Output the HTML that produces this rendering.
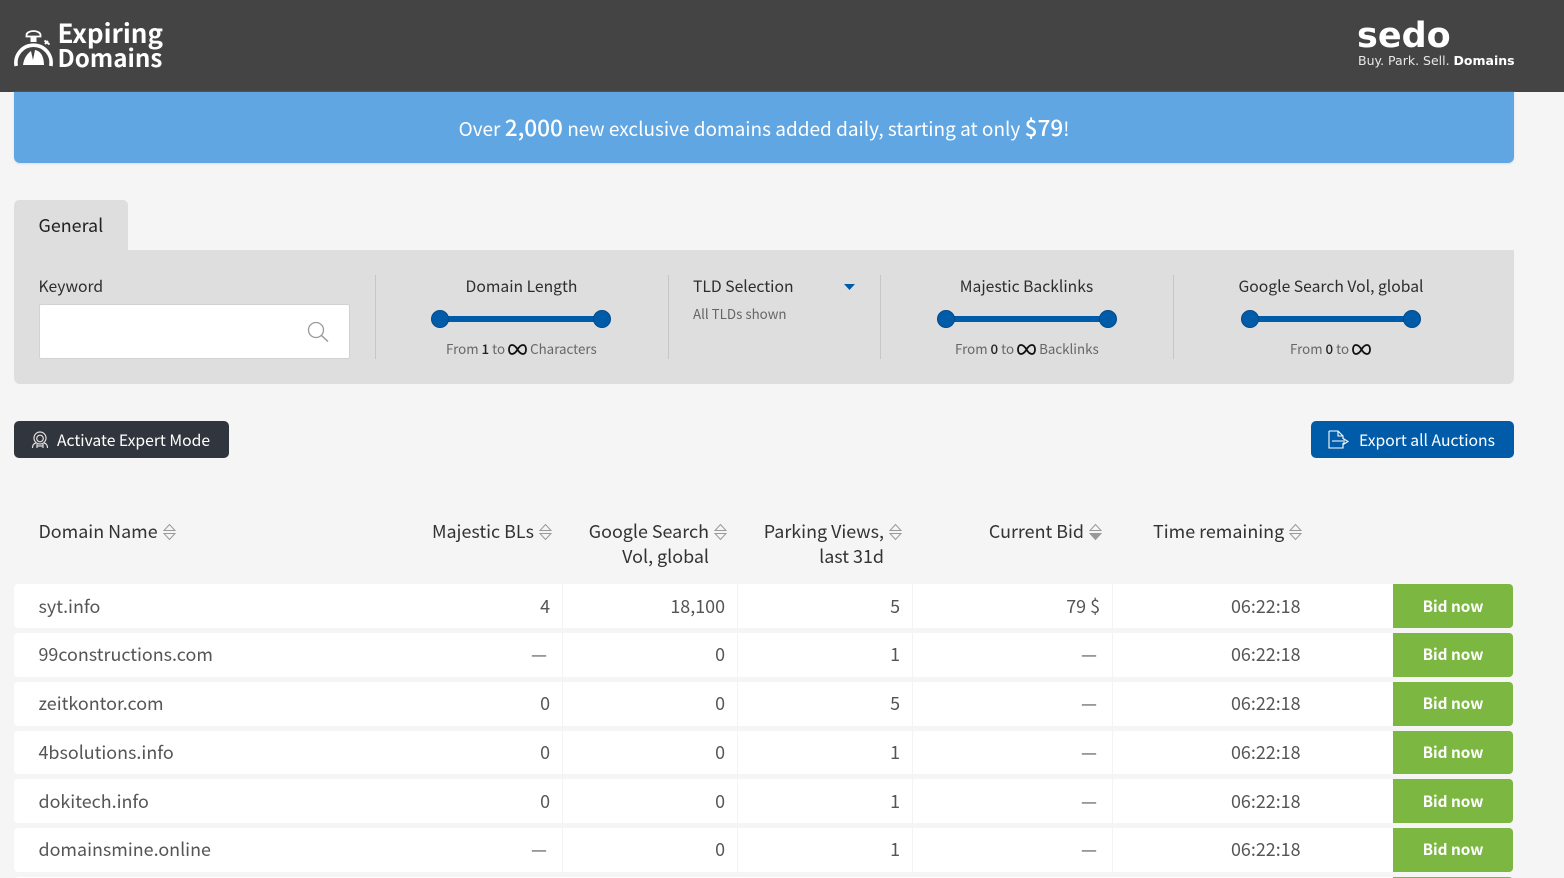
<!DOCTYPE html>
<html><head><meta charset="utf-8"><title>Expiring Domains</title>
<style>
*{box-sizing:border-box}
html,body{margin:0;padding:0;width:1564px;height:878px;overflow:hidden;background:#f5f5f5}
body{position:relative;font-family:"Noto Sans CJK JP","Liberation Sans",sans-serif;color:#333}
.a{position:absolute;white-space:nowrap}
.t{position:absolute;white-space:nowrap;line-height:24px;height:24px}
.lbl{font-size:15.7px;color:#2d2d2d}
.sm{font-size:13.35px;color:#666}
.sm b{color:#222;font-weight:500}
.sm svg{vertical-align:-1px;margin:0 3px 0 3px}
.th{font-size:17.9px;color:#333;line-height:25px}
.row{position:absolute;left:14px;width:1379px;height:44px;background:#fff;border-radius:4px 0 0 4px}
.sep{position:absolute;top:0;width:1px;height:48px;background:#f3f3f3}
.c{position:absolute;top:10px;line-height:24px;font-size:17.9px;color:#555;white-space:nowrap}
.u .c{top:9px}
.r{text-align:right}
.bid{position:absolute;left:1393px;width:120px;height:44px;background:#7cb742;border-radius:0 4px 4px 0;color:#fff;font-weight:700;font-size:15.3px;line-height:43px;text-align:center}
.bid.d{line-height:45px}
.vl{position:absolute;top:275px;width:1px;height:84px;background:#c6c6c6}
.track{position:absolute;height:6px;background:#005ca9;top:316px}
.dot{position:absolute;top:310px;width:18px;height:18px;border-radius:50%;background:#005ca9;border:1px solid #004a88}
</style></head><body>

<div class="a" style="left:0;top:0;width:1564px;height:92px;background:#444"></div>
<svg class="a" style="left:14px;top:28px" width="40" height="40" viewBox="0 0 40 40">
<path d="M12.500 8.500V7A7 4 0 0 1 26.500 7V8.500Z" fill="none" stroke="#fff" stroke-width="1.800"/>
<rect x="16.500" y="8" width="6" height="6" fill="#fff"/>
<path d="M2.200 38A17.600 17.600 0 1 1 36.800 38" fill="none" stroke="#fff" stroke-width="3.600"/>
<path d="M9 37C10 30 13 26 17 23L19 32L21 22C27 23 30 29 30 37Z" fill="#fff"/>
<path d="M31 16l3-3M30.500 12.500l5 4" stroke="#fff" stroke-width="2"/>
</svg>
<div class="a" style="left:57.500px;top:19px;font-size:26px;line-height:28px;font-weight:700;color:#fff">Expiring</div>
<div class="a" style="left:57.500px;top:43px;font-size:24.2px;line-height:28px;font-weight:700;color:#fff">Domains</div>
<div class="a" style="left:1357px;top:15px;font-family:'DejaVu Sans',sans-serif;font-weight:700;font-size:35px;line-height:42px;color:#fff">sedo</div>
<div class="a" style="left:1358px;top:53px;font-family:'DejaVu Sans',sans-serif;font-size:12.5px;line-height:16px;color:#e8e8e8">Buy. Park. Sell. <b style="color:#fff">Domains</b></div>

<div class="a" style="left:14px;top:92px;width:1500px;height:71px;background:#60a6e2;border-radius:0 0 6px 6px;box-shadow:0 1px 2px #ddd"></div>
<div class="a" style="left:14px;top:110px;width:1500px;text-align:center;color:#fff;font-size:19px;line-height:34px">Over <b style="font-weight:500;font-size:22.6px">2,000</b> new exclusive domains added daily, starting at only <b style="font-weight:500;font-size:22.6px">$79</b>!</div>

<div class="a" style="left:14px;top:200px;width:114px;height:52px;background:#dedede;border-radius:5px 5px 0 0"></div>
<div class="a" style="left:38.500px;top:213px;font-size:17.9px;line-height:24px;color:#222">General</div>
<div class="a" style="left:14px;top:250px;width:1500px;height:134px;background:#dedede;border-radius:0 0 6px 6px"></div>

<div class="t lbl" style="left:38.500px;top:274px">Keyword</div>
<div class="a" style="left:39px;top:304px;width:311px;height:55px;background:#fff;border:1px solid #d2d2d2;border-radius:2px"></div>
<svg class="a" style="left:306px;top:320px" width="24" height="24" viewBox="0 0 24 24"><circle cx="10" cy="10" r="7.500" fill="none" stroke="#999" stroke-width="1.300"/><path d="M15.500 15.500l6.500 6" stroke="#999" stroke-width="1.500"/></svg>

<div class="vl" style="left:375px"></div>
<div class="vl" style="left:668px"></div>
<div class="vl" style="left:880px"></div>
<div class="vl" style="left:1173px"></div>

<div class="t lbl" style="left:375px;width:293px;text-align:center;top:274px">Domain Length</div>
<div class="track" style="left:440px;width:162px"></div>
<div class="dot" style="left:431px"></div><div class="dot" style="left:593px"></div>
<div class="t sm" style="left:446px;top:337px">From <b>1</b> to<svg width="19" height="11" viewBox="0 0 19 11"><path d="M9.500 5.500C7.500 2 5.500 1 4 1 2 1 1 3 1 5.500S2 10 4 10C5.500 10 7.500 9 9.500 5.500S13.500 1 15 1C17 1 18 3 18 5.500S17 10 15 10C13.500 10 11.500 9 9.500 5.500Z" fill="none" stroke="#111" stroke-width="1.800"/></svg>Characters</div>

<div class="t lbl" style="left:693px;top:274px">TLD Selection</div>
<svg class="a" style="left:844px;top:283px" width="12" height="8"><path d="M0 1h11L5.500 7z" fill="#005ca9"/></svg>
<div class="t sm" style="left:693px;top:302px">All TLDs shown</div>

<div class="t lbl" style="left:880px;width:293px;text-align:center;top:274px">Majestic Backlinks</div>
<div class="track" style="left:946px;width:162px"></div>
<div class="dot" style="left:937px"></div><div class="dot" style="left:1099px"></div>
<div class="t sm" style="left:955px;top:337px">From <b>0</b> to<svg width="19" height="11" viewBox="0 0 19 11"><path d="M9.500 5.500C7.500 2 5.500 1 4 1 2 1 1 3 1 5.500S2 10 4 10C5.500 10 7.500 9 9.500 5.500S13.500 1 15 1C17 1 18 3 18 5.500S17 10 15 10C13.500 10 11.500 9 9.500 5.500Z" fill="none" stroke="#111" stroke-width="1.800"/></svg>Backlinks</div>

<div class="t lbl" style="left:1173px;width:316px;text-align:center;top:274px">Google Search Vol, global</div>
<div class="track" style="left:1250px;width:162px"></div>
<div class="dot" style="left:1241px"></div><div class="dot" style="left:1403px"></div>
<div class="t sm" style="left:1290px;top:337px">From <b>0</b> to<svg width="19" height="11" viewBox="0 0 19 11"><path d="M9.500 5.500C7.500 2 5.500 1 4 1 2 1 1 3 1 5.500S2 10 4 10C5.500 10 7.500 9 9.500 5.500S13.500 1 15 1C17 1 18 3 18 5.500S17 10 15 10C13.500 10 11.500 9 9.500 5.500Z" fill="none" stroke="#111" stroke-width="1.800"/></svg></div>

<div class="a" style="left:14px;top:421px;width:215px;height:37px;background:#31353d;border-radius:5px"></div>
<svg class="a" style="left:31px;top:431px" width="18" height="18" viewBox="0 0 18 18" fill="none" stroke="#ddd" stroke-width="1.200"><circle cx="9" cy="7" r="6"/><circle cx="9" cy="7.500" r="3.300"/><path d="M1.500 17c0-3 1-4.500 3.500-5M16.500 17c0-3-1-4.500-3.500-5M6 17v-4M12 17v-4M6 15h6"/></svg>
<div class="a" style="left:57px;top:427px;font-size:15.7px;line-height:25px;color:#fff">Activate Expert Mode</div>

<div class="a" style="left:1311px;top:421px;width:203px;height:37px;background:#005ca9;border-radius:5px"></div>
<svg class="a" style="left:1328px;top:430px" width="22" height="19" viewBox="0 0 22 19" fill="none" stroke="#fff" stroke-width="1.100"><path d="M1 1h9l5 5v3M15 13v5H1V1M10 1v5h5M4 11h11"/><path d="M16 9l4 2.500-4 2.500z"/></svg>
<div class="a" style="left:1359px;top:427px;font-size:15.7px;line-height:25px;color:#fff">Export all Auctions</div>

<div class="a th" style="left:38.500px;top:519px">Domain Name</div>
<div class="a th r" style="left:400px;width:134px;top:519px">Majestic BLs</div>
<div class="a th r" style="left:560px;width:149px;top:519px">Google Search<br>Vol, global</div>
<div class="a th r" style="left:735px;width:149px;top:519px">Parking Views,<br>last 31d</div>
<div class="a th r" style="left:934px;width:150px;top:519px">Current Bid</div>
<div class="a th" style="left:1153px;top:519px">Time remaining</div>

<svg class="a" style="left:163px;top:523px" width="13" height="18" fill="none" stroke="#999"><path d="M1 7.500L6.500 1.500 12 7.500zM1 10.500L6.500 16.500 12 10.500z"/></svg>
<svg class="a" style="left:539px;top:523px" width="13" height="18" fill="none" stroke="#999"><path d="M1 7.500L6.500 1.500 12 7.500zM1 10.500L6.500 16.500 12 10.500z"/></svg>
<svg class="a" style="left:714px;top:523px" width="13" height="18" fill="none" stroke="#999"><path d="M1 7.500L6.500 1.500 12 7.500zM1 10.500L6.500 16.500 12 10.500z"/></svg>
<svg class="a" style="left:889px;top:523px" width="13" height="18" fill="none" stroke="#999"><path d="M1 7.500L6.500 1.500 12 7.500zM1 10.500L6.500 16.500 12 10.500z"/></svg>
<svg class="a" style="left:1089px;top:523px" width="13" height="18" stroke="#999"><path fill="none" d="M1 7.500L6.500 1.500 12 7.500z"/><path fill="#999" d="M1 10.500L6.500 16.500 12 10.500z"/></svg>
<svg class="a" style="left:1289px;top:523px" width="13" height="18" fill="none" stroke="#999"><path d="M1 7.500L6.500 1.500 12 7.500zM1 10.500L6.500 16.500 12 10.500z"/></svg>

<div class="row" style="top:584px"><span class="c" style="left:24.500px">syt.info</span><span class="c r" style="right:843px">4</span><i class="sep" style="left:548px"></i><span class="c r" style="right:668px">18,100</span><i class="sep" style="left:723px"></i><span class="c r" style="right:493px">5</span><i class="sep" style="left:898px"></i><span class="c r" style="right:293px">79 $</span><i class="sep" style="left:1098px"></i><span class="c" style="left:1217px">06:22:18</span></div>
<div class="bid d" style="top:584px">Bid now</div>

<div class="row u" style="top:633px"><span class="c" style="left:24.500px">99constructions.com</span><span class="c r" style="right:846px">—</span><i class="sep" style="left:548px"></i><span class="c r" style="right:668px">0</span><i class="sep" style="left:723px"></i><span class="c r" style="right:493px">1</span><i class="sep" style="left:898px"></i><span class="c r" style="right:296px">—</span><i class="sep" style="left:1098px"></i><span class="c" style="left:1217px">06:22:18</span></div>
<div class="bid" style="top:633px">Bid now</div>

<div class="row u" style="top:682px"><span class="c" style="left:24.500px">zeitkontor.com</span><span class="c r" style="right:843px">0</span><i class="sep" style="left:548px"></i><span class="c r" style="right:668px">0</span><i class="sep" style="left:723px"></i><span class="c r" style="right:493px">5</span><i class="sep" style="left:898px"></i><span class="c r" style="right:296px">—</span><i class="sep" style="left:1098px"></i><span class="c" style="left:1217px">06:22:18</span></div>
<div class="bid" style="top:682px">Bid now</div>

<div class="row u" style="top:731px;height:43px"><span class="c" style="left:24.500px">4bsolutions.info</span><span class="c r" style="right:843px">0</span><i class="sep" style="left:548px"></i><span class="c r" style="right:668px">0</span><i class="sep" style="left:723px"></i><span class="c r" style="right:493px">1</span><i class="sep" style="left:898px"></i><span class="c r" style="right:296px">—</span><i class="sep" style="left:1098px"></i><span class="c" style="left:1217px">06:22:18</span></div>
<div class="bid" style="top:731px;height:43px">Bid now</div>

<div class="row" style="top:779px"><span class="c" style="left:24.500px">dokitech.info</span><span class="c r" style="right:843px">0</span><i class="sep" style="left:548px"></i><span class="c r" style="right:668px">0</span><i class="sep" style="left:723px"></i><span class="c r" style="right:493px">1</span><i class="sep" style="left:898px"></i><span class="c r" style="right:296px">—</span><i class="sep" style="left:1098px"></i><span class="c" style="left:1217px">06:22:18</span></div>
<div class="bid d" style="top:779px">Bid now</div>

<div class="row u" style="top:828px"><span class="c" style="left:24.500px">domainsmine.online</span><span class="c r" style="right:846px">—</span><i class="sep" style="left:548px"></i><span class="c r" style="right:668px">0</span><i class="sep" style="left:723px"></i><span class="c r" style="right:493px">1</span><i class="sep" style="left:898px"></i><span class="c r" style="right:296px">—</span><i class="sep" style="left:1098px"></i><span class="c" style="left:1217px">06:22:18</span></div>
<div class="bid" style="top:828px">Bid now</div>

<div class="row" style="top:877px"></div>
<div class="bid" style="top:877px"></div>
</body></html>
